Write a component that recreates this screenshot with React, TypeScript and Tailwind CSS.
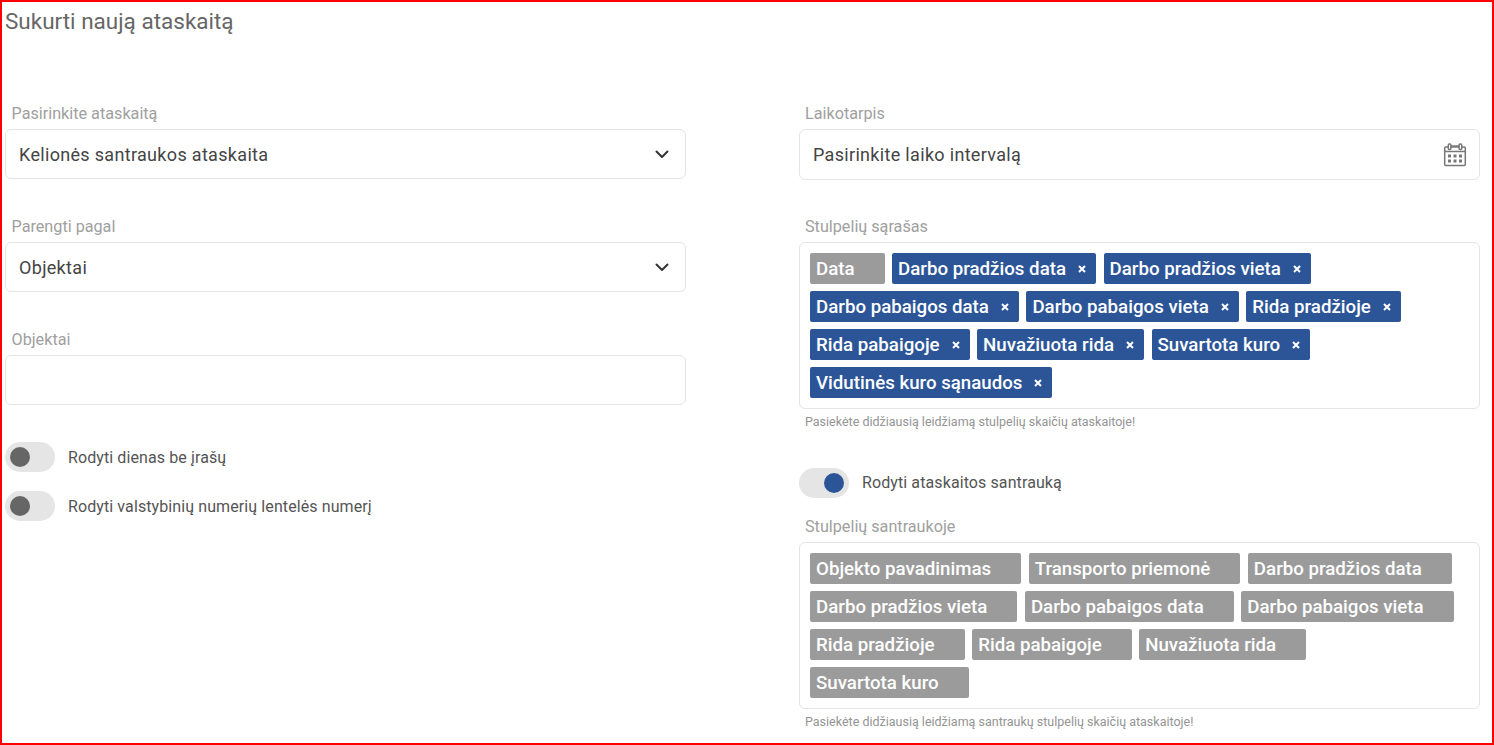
import React from "react";

const Chevron = () => (
  <svg width="14" height="9" viewBox="0 0 14 9" fill="none" className="mr-[4px]">
    <path d="M1.5 1.5 7 7l5.5-5.5" stroke="#333" strokeWidth="2" strokeLinecap="round" strokeLinejoin="round" />
  </svg>
);

const Calendar = () => (
  <svg width="24" height="24" viewBox="0 0 24 24" fill="none" stroke="#777" strokeWidth="1.5">
    <rect x="1.7" y="4" width="20.6" height="18.6" rx="1" />
    <path d="M1.7 8.5h20.6" />
    <rect x="5.3" y="1" width="2.6" height="5.5" rx="1" fill="#fff" />
    <rect x="16.1" y="1" width="2.6" height="5.5" rx="1" fill="#fff" />
    <path d="M8 3h8" />
    <g fill="#777" stroke="none">
      <rect x="5" y="11.5" width="3" height="3" />
      <rect x="10.5" y="11.5" width="3" height="3" />
      <rect x="16" y="11.5" width="3" height="3" />
      <rect x="5" y="16.5" width="3" height="3" />
      <rect x="10.5" y="16.5" width="3" height="3" />
      <rect x="16" y="16.5" width="3" height="3" />
    </g>
  </svg>
);

const Label = ({ children, right }: { children: React.ReactNode; right?: boolean }) => (
  <div className={`${right ? "pl-[6px]" : "pl-[6.5px]"} h-[20px] pt-[1px] leading-[20px] text-[16.2px] text-[#a0a0a0] mb-[6px]`}>{children}</div>
);

const Field = ({ children, h = "h-[50px]" }: { children?: React.ReactNode; h?: string }) => (
  <div className={`${h} flex items-center justify-between rounded-[6px] border border-[#e4e4e4] bg-white pl-[13px] pr-[12px] text-[18px] tracking-[0.32px] text-[#444]`}>
    {children}
  </div>
);

const Toggle = ({ on, children }: { on?: boolean; children: React.ReactNode }) => (
  <div className="flex items-center h-[30px]">
    <div className={`w-[50px] h-[30px] rounded-full bg-[#e5e5e5] flex items-center px-[5px] ${on ? "justify-end" : "justify-start"}`}>
      <div className={`w-[20px] h-[20px] rounded-full ${on ? "bg-[#2c5598]" : "bg-[#666666]"}`} />
    </div>
    <span className={`ml-[13px] text-[16px] tracking-[0.1px] text-[#555] ${on ? "" : "pt-[1px]"}`}>{children}</span>
  </div>
);

const Tag = ({ label, on }: { label: string; on?: boolean }) => (
  <div className={`h-[31px] flex items-center rounded-[2px] pl-[6px] text-[18.7px] font-medium text-white ${on ? "bg-[#2c5598]" : "bg-[#9b9b9b]"}`}>
    <span className="pt-[2px]">{label}</span>
    <span className="w-[30px] flex justify-center pl-[2px]">
      {on && (
        <svg width="8" height="8" viewBox="0 0 8 8">
          <path d="M1 1l6 6M7 1 1 7" stroke="#fff" strokeWidth="2" />
        </svg>
      )}
    </span>
  </div>
);

const TagBox = ({ children }: { children: React.ReactNode }) => (
  <div className="h-[167px] rounded-[6px] border border-[#e4e4e4] bg-white pl-[10px] pr-[10px] pt-[10px] flex flex-wrap content-start gap-x-[7.5px] gap-y-[7px]">
    {children}
  </div>
);

const Help = ({ children }: { children: React.ReactNode }) => (
  <div className="pl-[6px] mt-[5px] h-[16px] leading-[16px] text-[12.5px] text-[#949494]">{children}</div>
);

const columns = [
  "Darbo pradžios data",
  "Darbo pradžios vieta",
  "Darbo pabaigos data",
  "Darbo pabaigos vieta",
  "Rida pradžioje",
  "Rida pabaigoje",
  "Nuvažiuota rida",
  "Suvartota kuro",
  "Vidutinės kuro sąnaudos",
];

const summary = [
  "Objekto pavadinimas",
  "Transporto priemonė",
  "Darbo pradžios data",
  "Darbo pradžios vieta",
  "Darbo pabaigos data",
  "Darbo pabaigos vieta",
  "Rida pradžioje",
  "Rida pabaigoje",
  "Nuvažiuota rida",
  "Suvartota kuro",
];

export default function App() {
  return (
    <div className="w-[1494px] h-[745px] overflow-hidden border-2 border-[#ff0000] bg-white pl-[3px] pr-[12px] font-['Roboto',sans-serif]">
      <h1 className="h-[40px] pt-[4px] leading-[30px] text-[22.5px] font-normal text-[#666666]">Sukurti naują ataskaitą</h1>
      <div className="mt-[61px] grid grid-cols-[681px_681px] gap-x-[113px]">
        <div>
          <Label>Pasirinkite ataskaitą</Label>
          <Field>
            <span>Kelionės santraukos ataskaita</span>
            <Chevron />
          </Field>
          <div className="h-[37px]" />
          <Label>Parengti pagal</Label>
          <Field>
            <span>Objektai</span>
            <Chevron />
          </Field>
          <div className="h-[37px]" />
          <Label>Objektai</Label>
          <Field />
          <div className="mt-[37px] flex flex-col gap-[19px]">
            <Toggle>Rodyti dienas be įrašų</Toggle>
            <Toggle>Rodyti valstybinių numerių lentelės numerį</Toggle>
          </div>
        </div>
        <div>
          <Label right>Laikotarpis</Label>
          <Field h="h-[51px]">
            <span>Pasirinkite laiko intervalą</span>
            <Calendar />
          </Field>
          <div className="h-[36px]" />
          <Label right>Stulpelių sąrašas</Label>
          <TagBox>
            <Tag label="Data" />
            {columns.map((c) => (
              <Tag key={c} label={c} on />
            ))}
          </TagBox>
          <Help>Pasiekėte didžiausią leidžiamą stulpelių skaičių ataskaitoje!</Help>
          <div className="mt-[38px]">
            <Toggle on>Rodyti ataskaitos santrauką</Toggle>
          </div>
          <div className="h-[18px]" />
          <Label right>Stulpelių santraukoje</Label>
          <TagBox>
            {summary.map((c) => (
              <Tag key={c} label={c} />
            ))}
          </TagBox>
          <Help>Pasiekėte didžiausią leidžiamą santraukų stulpelių skaičių ataskaitoje!</Help>
        </div>
      </div>
    </div>
  );
}
